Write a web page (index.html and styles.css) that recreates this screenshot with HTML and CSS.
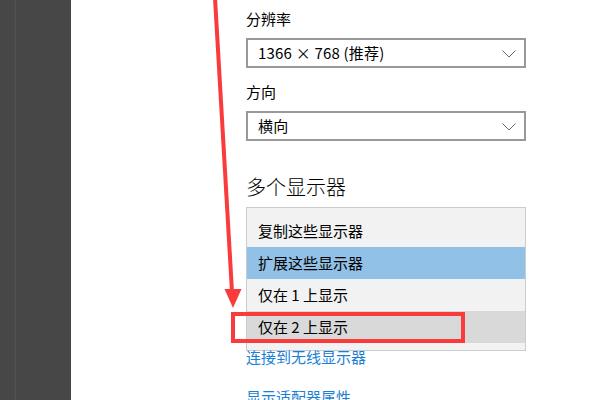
FILE: index.html
```html
<!DOCTYPE html>
<html lang="zh-CN">
<head>
    <meta charset="UTF-8">
    <meta name="viewport" content="width=device-width, initial-scale=1.0">
    <title>显示设置</title>
    <link rel="stylesheet" href="styles.css">
</head>
<body>

    <div class="sidebar">
        <div class="sidebar-strip"></div>
    </div>

    <div class="main">
        <div class="label">分辨率</div>
        <div class="select">
            <span>1366 × 768 (推荐)</span>
            <svg class="chevron" width="14" height="8" viewBox="0 0 14 8"><path d="M0.5 0.5 L7 7 L13.5 0.5" fill="none" stroke="#6b6b6b" stroke-width="1"/></svg>
        </div>

        <div class="label label-gap">方向</div>
        <div class="select">
            <span>横向</span>
            <svg class="chevron" width="14" height="8" viewBox="0 0 14 8"><path d="M0.5 0.5 L7 7 L13.5 0.5" fill="none" stroke="#6b6b6b" stroke-width="1"/></svg>
        </div>

        <h2 class="heading">多个显示器</h2>
        <ul class="options">
            <li>复制这些显示器</li>
            <li class="selected">扩展这些显示器</li>
            <li>仅在 1 上显示</li>
            <li class="hover">仅在 2 上显示</li>
        </ul>

        <a class="link link-first" href="#">连接到无线显示器</a>
        <a class="link" href="#">显示适配器属性</a>
    </div>

    <!-- 标注：箭头和红框 -->
    <svg class="markup" width="600" height="400" viewBox="0 0 600 400">
        <line x1="215" y1="-2" x2="232" y2="292" stroke="#f93b3b" stroke-width="4"/>
        <polygon points="224.5,289 241.5,289 233,308" fill="#f93b3b"/>
        <rect x="233" y="314" width="230" height="27" fill="none" stroke="#f93b3b" stroke-width="4"/>
    </svg>

</body>
</html>
```

FILE: styles.css
```css
body { margin: 0; height: 400px; overflow: hidden; display: flex; position: relative; background: #fff; font-family: "Noto Sans CJK SC", "Noto Sans", sans-serif; color: #000; }
.sidebar { width: 71px; flex-shrink: 0; background: #474747; }
.sidebar-strip { width: 16px; height: 100%; border-right: 1px solid #525252; box-sizing: border-box; }
.main { padding-left: 175px; padding-top: 9px; width: 280px; }
.label { font-size: 15px; line-height: 20px; }
.label-gap { margin-top: 14px; }
.select { margin-top: 9px; height: 30px; border: 2px solid #999; box-sizing: border-box; display: flex; align-items: center; justify-content: space-between; padding: 0 8px 0 10px; font-size: 15px; }
.select span { margin-top: -1px; letter-spacing: 0.2px; }
.chevron { display: block; margin-top: 1px; }
.heading { margin: 32px 0 0; font-size: 20px; line-height: 28px; font-weight: 300; }
.options { list-style: none; margin: 6px 0 0; padding: 7px 0; border: 1px solid #ccc; background: #f2f2f2; font-size: 15px; }
.options li { height: 32px; line-height: 31px; padding-left: 11px; }
.options .selected { background: #91c1e7; }
.options .hover { background: #d9d9d9; }
.link { display: block; font-size: 15px; line-height: 20px; color: #1a7fd6; text-decoration: none; }
.link-first { margin-top: -4px; margin-bottom: 20px; }
.markup { position: absolute; left: 0; top: 0; pointer-events: none; }
```
